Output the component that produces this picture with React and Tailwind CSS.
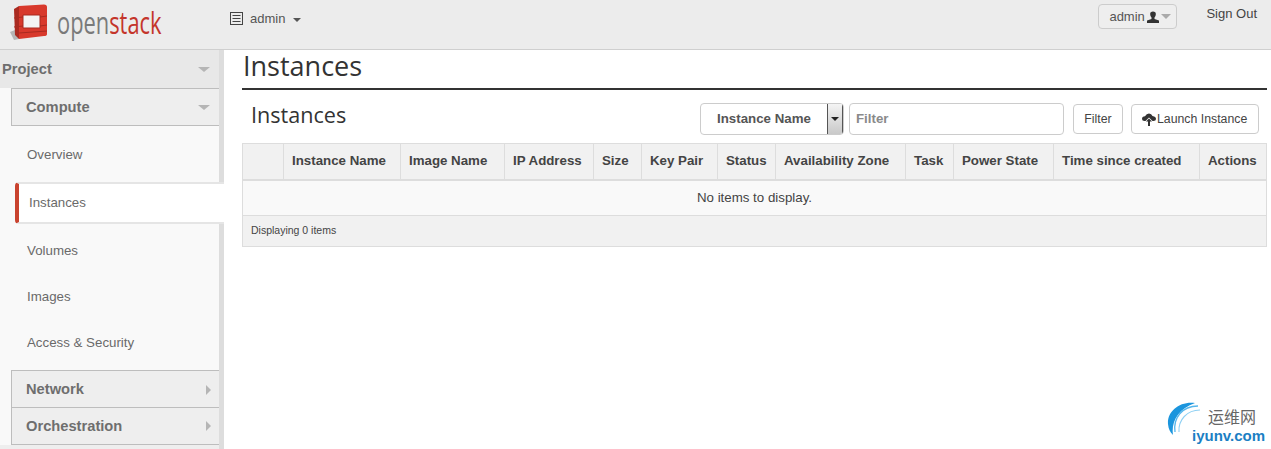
const COLUMNS = [
  ["", "w-[41px]"],
  ["Instance Name", "w-[117px]"],
  ["Image Name", "w-[104px]"],
  ["IP Address", "w-[89px]"],
  ["Size", "w-[48px]"],
  ["Key Pair", "w-[76px]"],
  ["Status", "w-[58px]"],
  ["Availability Zone", "w-[130px]"],
  ["Task", "w-[48px]"],
  ["Power State", "w-[100px]"],
  ["Time since created", "w-[146px]"],
  ["Actions", "w-[67px]"],
];

function Logo() {
  return (
    <svg width="40" height="40" viewBox="0 0 40 40" className="shrink-0">
      <path d="M1 30 L6 28 L10 37 L5 38 Z" fill="#b5b5b5" />
      <path d="M5 7 L10 4 L10 37 L6 33 Z" fill="#a92a20" />
      <path d="M10 4 L35 2.500 Q38 2.500 38 5 L38 32 Q38 34 35 34 L10 37 Z" fill="#d8392c" />
      <path d="M14 13 L31 13 L31 26 L14 26 Z" fill="#f4f4f4" />
      <path d="M14 13 L31 13 L31 26 L14 26 Z" fill="none" stroke="#a92a20" strokeWidth="1" />
      <path d="M5 16 L14 15 M5 25 L14 24 M31 15 L38 14 M31 24 L38 23 M10 31 L38 29" stroke="#a92a20" strokeWidth="1" />
    </svg>
  );
}

function Watermark() {
  return (
    <div className="absolute right-0 bottom-0 h-[47px] w-[104px]">
      <svg width="46" height="44" viewBox="0 0 46 44" className="absolute left-0 top-0">
        <path d="M28 1 C12 -1 0 10 1 22 C1.500 27 3 30 6 33 C4 20 11 7 28 1 Z" fill="#1b95dd" />
        <path d="M31 4 C15 4 6 16 8 30" fill="none" stroke="#55b6ec" strokeWidth="1.300" />
        <path d="M33 8 C20 8 11 18 12 30" fill="none" stroke="#8fd0f3" strokeWidth="1.100" />
      </svg>
      <div className="absolute left-[41px] top-[4px] text-[16px] leading-[20px] text-[#666666] font-['Noto_Sans_CJK_SC',sans-serif]">
        运维网
      </div>
      <div className="absolute left-[25px] top-[24px] text-[15px] leading-[20px] font-bold text-[#1b7fc4] font-['Liberation_Sans',sans-serif] whitespace-nowrap">
        iyunv.com
      </div>
    </div>
  );
}

function Header() {
  return (
    <header className="flex h-[50px] shrink-0 items-start border-b border-[#cfcfcf] bg-[#ececec]">
      <div className="flex w-[230px] items-center pl-[9px] pt-[2px]">
        <Logo />
        <span className="ml-[8px] origin-left scale-x-[0.705] text-[31px] leading-[36px] font-['Open_Sans',sans-serif] text-[#7a7a7a] whitespace-nowrap">
          open<span className="text-[#c4352b]">stack</span>
        </span>
      </div>
      <div className="flex items-center pt-[11px] text-[13px] leading-[15px] text-[#555555]">
        <svg width="13" height="13" viewBox="0 0 13 13" className="mr-[7px]">
          <rect x="0.500" y="0.500" width="12" height="12" fill="none" stroke="#444444" />
          <path d="M2.500 3.500H10.500M2.500 6.500H10.500M2.500 9.500H10.500" stroke="#444444" strokeWidth="1.200" />
        </svg>
        admin
        <span className="ml-[8px] mt-[2px] border-x-4 border-t-4 border-x-transparent border-t-[#555555]" />
      </div>
      <div className="ml-auto flex items-start pr-[14px] pt-[4px] text-[13px] text-[#555555]">
        <div className="mr-[29px] flex h-[25px] w-[79px] items-center rounded border border-[#cccccc] bg-[#eeeeee] pl-[10px]">
          admin
          <svg width="12" height="12" viewBox="0 0 12 12" className="ml-[2px]">
            <path d="M3.500 1.500 Q6 -0.500 8.500 1.500 Q9.500 4 7.500 6.500 L7.500 8 L12 9.500 L12 12 L0 12 L0 9.500 L4.500 8 L4.500 6.500 Q2.500 4 3.500 1.500 Z" fill="#333333" />
          </svg>
          <span className="ml-[2px] border-x-[5px] border-t-[5px] border-x-transparent border-t-[#aaaaaa]" />
        </div>
        <span className="text-[#444444] text-[13px] leading-[20px]">Sign Out</span>
      </div>
    </header>
  );
}

function SectionHead({ label, open, className }) {
  return (
    <div className={`flex items-center justify-between font-bold text-[14.7px] text-[#6e6e6e] ${className}`}>
      {label}
      {open ? (
        <span className="border-x-[6px] border-t-[5px] border-x-transparent border-t-[#b5b5b5]" />
      ) : (
        <span className="mr-[2px] border-y-[5px] border-l-[5px] border-y-transparent border-l-[#b5b5b5]" />
      )}
    </div>
  );
}

function NavItem({ label, className }) {
  return <div className={`flex items-center pl-[27px] text-[13.3px] text-[#6a6a6a] ${className}`}>{label}</div>;
}

function Sidebar() {
  return (
    <aside className="relative h-[399px] w-[224px] shrink-0 border-r-[5px] border-[#dddddd] bg-[#f9f9f9]">
      <SectionHead label="Project" open className="h-[38px] bg-[#e8e8e8] pl-[2px] pr-[9px]" />
      <div className="pl-[11px]">
        <SectionHead
          label="Compute"
          open
          className="h-[38px] border border-r-0 border-[#bdbdbd] bg-[#eeeeee] pl-[14px] pr-[9px]"
        />
      </div>
      <NavItem label="Overview" className="h-[56px] pt-[1px]" />
      <div className="relative z-10 ml-[15px] mr-[-5px] flex h-[42px] items-center rounded-l border-y-2 border-[#e5e5e5] border-l-4 border-l-[#c9432f] bg-white pl-[10px] text-[13.3px] text-[#6a6a6a]">
        Instances
      </div>
      <NavItem label="Volumes" className="h-[52px] pt-[1px]" />
      <NavItem label="Images" className="h-[42px]" />
      <NavItem label="Access & Security" className="h-[52px] pb-[2px]" />
      <div className="pl-[11px]">
        <SectionHead
          label="Network"
          className="h-[37px] border border-r-0 border-b-0 border-[#bdbdbd] bg-[#eeeeee] pl-[14px] pr-[6px] pt-[1px]"
        />
        <SectionHead
          label="Orchestration"
          className="h-[38px] border border-r-0 border-[#bdbdbd] bg-[#eeeeee] pl-[14px] pr-[6px]"
        />
      </div>
      <div className="h-1 bg-[#eeeeee]" />
    </aside>
  );
}

function Toolbar() {
  return (
    <div className="flex h-[53px] items-start">
      <h3 className="ml-[9px] mt-[12px] text-[21.6px] leading-[26px] text-[#333333] font-['Open_Sans',sans-serif]">Instances</h3>
      <div className="ml-auto mr-[8px] mt-[13px] flex items-center text-[13.3px]">
        <div className="flex h-[32px] w-[144px] items-center overflow-hidden rounded border border-[#cccccc] bg-white">
          <span className="flex-1 pl-[16px] font-bold text-[#555555]">Instance Name</span>
          <span className="flex h-full w-[16px] items-center justify-center border-x border-[#555555] bg-gradient-to-b from-[#f4f4f4] to-[#c9c9c9]">
            <span className="border-x-[4px] border-t-[4px] border-x-transparent border-t-[#222222]" />
          </span>
        </div>
        <div className="ml-[5px] flex h-[32px] w-[215px] items-center rounded border border-[#cccccc] bg-white pl-[6px] font-bold text-[#8a8a8a]">
          Filter
        </div>
        <button className="ml-[9px] h-[30px] w-[50px] rounded border border-[#cccccc] bg-white text-[12.3px] text-[#444444]">
          Filter
        </button>
        <button className="ml-[8px] flex h-[30px] w-[128px] items-center rounded border border-[#cccccc] bg-white pl-[10px] text-[12.3px] text-[#444444]">
          <svg width="14" height="13" viewBox="0 0 14 13" className="mr-[1px]">
            <path d="M7 0.500 Q9.500 0.500 10.500 3 Q14 3.500 14 6 Q14 8 11.500 8 L2.500 8 Q0 8 0 6 Q0 3.500 3 3.300 Q4.500 0.500 7 0.500 Z" fill="#333333" />
            <path d="M7 4.500 L11 8.500 L8.500 8.500 L8.500 13 L5.500 13 L5.500 8.500 L3 8.500 Z" fill="#ffffff" />
            <path d="M7 5.500 L10 8.500 L8 8.500 L8 13 L6 13 L6 8.500 L4 8.500 Z" fill="#333333" />
          </svg>
          Launch Instance
        </button>
      </div>
    </div>
  );
}

function InstancesTable() {
  return (
    <table className="w-[1024px] table-fixed border-collapse border border-[#dddddd] text-[13.3px] text-[#333333]">
      <colgroup>
        {COLUMNS.map(([name, width]) => (
          <col key={name || "select"} className={width} />
        ))}
      </colgroup>
      <thead>
        <tr className="h-[36px] bg-[#f1f1f1]">
          {COLUMNS.map(([name]) => (
            <th
              key={name || "select"}
              className="border-b-2 border-l border-[#dddddd] pl-[8px] text-left font-bold whitespace-nowrap text-[#444444]"
            >
              {name}
            </th>
          ))}
        </tr>
      </thead>
      <tbody>
        <tr className="h-[36px] bg-[#f9f9f9]">
          <td colSpan={12} className="border-b border-[#dddddd] text-center text-[#444444]">
            No items to display.
          </td>
        </tr>
      </tbody>
      <tfoot>
        <tr className="h-[31px] bg-[#f1f1f1]">
          <td colSpan={12} className="pl-[8px] text-[10.5px] text-[#444444]">
            Displaying 0 items
          </td>
        </tr>
      </tfoot>
    </table>
  );
}

export default function App() {
  return (
    <div className="relative flex h-[449px] w-[1271px] flex-col overflow-hidden bg-white font-['Liberation_Sans',sans-serif]">
      <Header />
      <div className="flex flex-1">
        <Sidebar />
        <main className="flex-1 pl-[18px] pr-[4px]">
          <div className="h-[40px] border-b-2 border-[#333333]">
            <h1 className="pl-[1px] text-[27px] leading-[31px] text-[#333333] font-['Open_Sans',sans-serif]">Instances</h1>
          </div>
          <Toolbar />
          <InstancesTable />
        </main>
      </div>
      <Watermark />
    </div>
  );
}
